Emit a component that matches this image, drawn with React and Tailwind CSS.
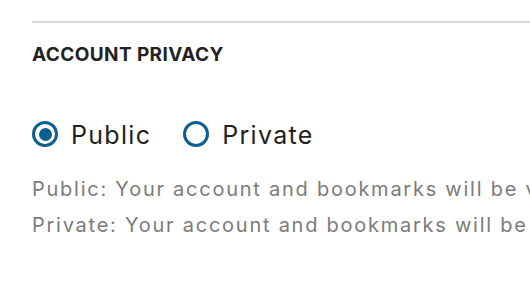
import { useState } from 'react';

const Radio = ({ checked, label, onSelect }) => (
  <label className="flex items-center gap-[13px] cursor-pointer" onClick={onSelect}>
    <span className="w-[26px] h-[26px] rounded-full border-[3px] border-[#0d5f8f] flex items-center justify-center -translate-y-[1px]">
      {checked && <span className="w-[13px] h-[13px] rounded-full bg-[#0d5f8f]"></span>}
    </span>
    <span className="text-[25px] leading-8 tracking-[1.3px] text-[#222]">{label}</span>
  </label>
);

const App = () => {
  const [privacy, setPrivacy] = useState('public');

  return (
    <div className="w-[530px] h-[284px] bg-white overflow-hidden font-['Inter',sans-serif]">
      <div className="pl-8 pt-[21px]">
        <div className="h-[2px] bg-[#d9d9d9]"></div>
        <h2 className="mt-[18px] text-[19px] leading-7 font-bold tracking-[0.4px] text-[#222] whitespace-nowrap">ACCOUNT PRIVACY</h2>
        <div className="mt-[50px] flex items-center gap-8">
          <Radio checked={privacy === 'public'} label="Public" onSelect={() => setPrivacy('public')} />
          <Radio checked={privacy === 'private'} label="Private" onSelect={() => setPrivacy('private')} />
        </div>
        <div className="mt-[20px] text-[20px] leading-9 tracking-[1.75px] text-[#7b7b7b] whitespace-nowrap">
          <p>Public: Your account and bookmarks will be visible to everyone.</p>
          <p>Private: Your account and bookmarks will be visible only to you.</p>
        </div>
      </div>
    </div>
  );
};

export default App;
